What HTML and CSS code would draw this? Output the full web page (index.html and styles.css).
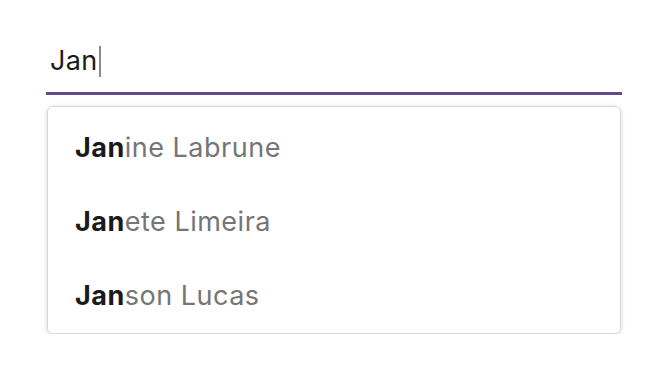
FILE: index.html
```html
<!DOCTYPE html>
<html>
<head>
<meta charset="utf-8">
<link rel="stylesheet" href="styles.css">
</head>
<body>
<div class="wrap">
  <div class="field"><span class="value">Jan</span><span class="caret"></span></div>
  <ul class="menu">
    <li class="item"><b>Jan</b>ine Labrune</li>
    <li class="item"><b>Jan</b>ete Limeira</li>
    <li class="item"><b>Jan</b>son Lucas</li>
  </ul>
</div>
</body>
</html>
```
FILE: styles.css
```css
* { box-sizing: border-box; }
body {
  margin: 0;
  background: #fff;
  font-family: Inter, "Noto Sans", sans-serif;
}
.wrap {
  padding: 36px 46px 0 46px;
  width: 668px;
}
.field {
  display: flex;
  align-items: center;
  height: 59px;
  padding-left: 4px;
  padding-bottom: 6px;
  border-bottom: 3px solid #5f4b8b;
  font-size: 27px;
  letter-spacing: 0.4px;
  color: #1a1a1a;
}
.value { line-height: 32px; }
.caret {
  display: inline-block;
  width: 2px;
  height: 31px;
  margin-left: 1px;
  background: #8a8a8a;
}
.menu {
  list-style: none;
  margin: 11px 1px 0 1px;
  padding: 3px 0 1px 0;
  border: 1px solid #d6d6d6;
  border-radius: 6px;
  box-shadow: 0 1px 5px rgba(0,0,0,0.16);
}
.item {
  height: 74px;
  display: flex;
  align-items: center;
  padding-left: 27px;
  font-size: 27px;
  letter-spacing: 0.5px;
  color: #757575;
}
.item b {
  font-weight: 700;
  color: #1a1a1a;
}
```
